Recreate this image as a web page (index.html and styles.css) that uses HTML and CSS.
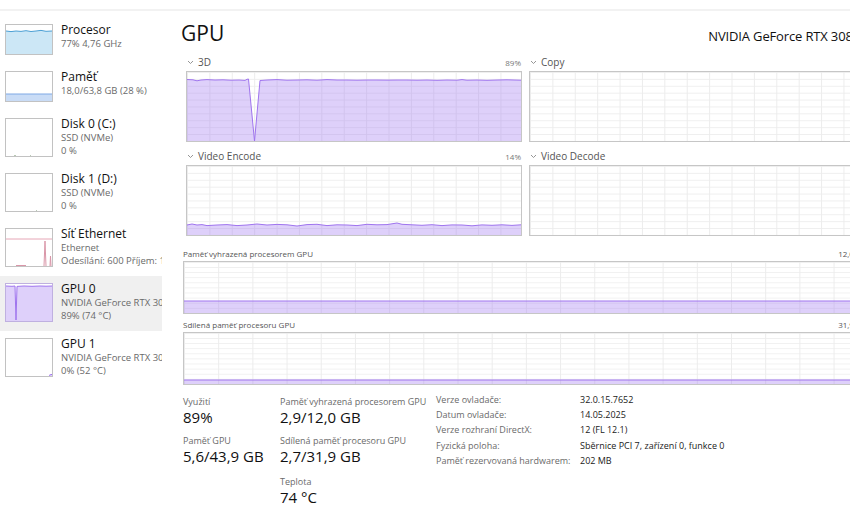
FILE: index.html
```html
<!DOCTYPE html>
<html lang="cs">
  <head>
    <meta charset="UTF-8" />
    <meta name="viewport" content="width=device-width, initial-scale=1.0" />
    <title>Výkon - GPU 0</title>
    <link rel="stylesheet" href="styles.css">
  </head>
  <body>
    <div class="topbar"></div>

    <div class="layout">
      <!-- left list of devices -->
      <nav class="sidebar">
        <div class="item">
          <div class="thumb short">
            <svg viewBox="0 0 46 29" preserveAspectRatio="none">
              <polygon class="cpu-fill" points="0,6 5,6.6 10,6 15,6.4 20,5.7 25,6.5 30,6 35,5.4 40,6.3 46,6 46,29 0,29" />
              <polyline class="cpu-line" points="0,6 5,6.6 10,6 15,6.4 20,5.7 25,6.5 30,6 35,5.4 40,6.3 46,6" />
            </svg>
          </div>
          <div class="item-text">
            <div class="item-title">Procesor</div>
            <div class="item-sub">77% 4,76 GHz</div>
          </div>
        </div>

        <div class="item">
          <div class="thumb short">
            <svg viewBox="0 0 46 29" preserveAspectRatio="none">
              <rect class="mem-fill" x="0" y="22" width="46" height="7" />
              <line class="mem-line" x1="0" y1="22" x2="46" y2="22" />
            </svg>
          </div>
          <div class="item-text">
            <div class="item-title">Paměť</div>
            <div class="item-sub">18,0/63,8 GB (28 %)</div>
          </div>
        </div>

        <div class="item">
          <div class="thumb">
            <svg viewBox="0 0 46 37" preserveAspectRatio="none">
              <line class="disk-line" x1="8" y1="36.5" x2="10" y2="36.5" />
              <line class="disk-line" x1="24" y1="36.5" x2="25" y2="36.5" />
            </svg>
          </div>
          <div class="item-text">
            <div class="item-title">Disk 0 (C:)</div>
            <div class="item-sub">SSD (NVMe)</div>
            <div class="item-sub">0 %</div>
          </div>
        </div>

        <div class="item">
          <div class="thumb">
            <svg viewBox="0 0 46 37" preserveAspectRatio="none">
              <line class="disk-line" x1="30" y1="36.5" x2="31" y2="36.5" />
            </svg>
          </div>
          <div class="item-text">
            <div class="item-title">Disk 1 (D:)</div>
            <div class="item-sub">SSD (NVMe)</div>
            <div class="item-sub">0 %</div>
          </div>
        </div>

        <div class="item">
          <div class="thumb">
            <svg viewBox="0 0 46 37" preserveAspectRatio="none">
              <line class="net-line" x1="0" y1="10" x2="46" y2="10" />
              <polyline class="net-spike" points="38,37 39,12 40,37" />
              <polyline class="net-spike" points="44,37 44.5,27 45,37" />
              <line class="net-spike" x1="10" y1="36.5" x2="20" y2="36.5" />
            </svg>
          </div>
          <div class="item-text">
            <div class="item-title">Síť Ethernet</div>
            <div class="item-sub">Ethernet</div>
            <div class="item-sub">Odesílání: 600 Příjem: 1,6 Mb/s</div>
          </div>
        </div>

        <div class="item selected">
          <div class="thumb gpu">
            <svg viewBox="0 0 46 37" preserveAspectRatio="none">
              <polygon class="gpu-fill" points="0,2 6,2.3 9,2 10,36 11,2.4 18,2 26,2.3 34,2 40,2.2 46,2 46,37 0,37" />
              <polyline class="gpu-line" points="0,2 6,2.3 9,2 10,36 11,2.4 18,2 26,2.3 34,2 40,2.2 46,2" />
            </svg>
          </div>
          <div class="item-text">
            <div class="item-title">GPU 0</div>
            <div class="item-sub">NVIDIA GeForce RTX 3080</div>
            <div class="item-sub">89% (74 °C)</div>
          </div>
        </div>

        <div class="item">
          <div class="thumb">
            <svg viewBox="0 0 46 37" preserveAspectRatio="none">
              <polygon class="gpu-fill" points="43,37 45,35.5 46,35.5 46,37" />
              <polyline class="gpu-line" points="43,36.5 45,35.5 46,35.5" />
            </svg>
          </div>
          <div class="item-text">
            <div class="item-title">GPU 1</div>
            <div class="item-sub">NVIDIA GeForce RTX 3070</div>
            <div class="item-sub">0% (52 °C)</div>
          </div>
        </div>
      </nav>

      <main class="main">
        <div class="header">
          <h1>GPU</h1>
          <div class="device-name">NVIDIA GeForce RTX 3080</div>
        </div>

        <div class="engines">
          <div class="engine">
            <div class="engine-head">
              <span class="engine-name"><svg class="chevron" viewBox="0 0 7 5"><polyline points="1,1 3.5,3.5 6,1" /></svg>3D</span>
              <span class="engine-pct">89%</span>
            </div>
            <div class="graph">
              <svg viewBox="0 0 334 69" preserveAspectRatio="none">
                <polygon class="gpu-fill" points="0,7.5 6,7.8 10,8.8 14,8 20,7.6 28,8 36,7.8 44,8.2 52,8 58,8.4 60,7.3 61.5,7 67.5,69 73,8.5 80,8 90,7.6 100,8.2 110,8 120,7.8 130,8.2 140,7.6 150,8 160,8 170,8.2 180,8 190,8 200,8.1 210,8 220,8 230,8.2 240,8 250,8.3 260,8 270,8.2 275,7.6 280,8.2 290,8 300,8.3 310,8 320,7.8 334,8.2 334,69 0,69" />
                <polyline class="gpu-line" points="0,7.5 6,7.8 10,8.8 14,8 20,7.6 28,8 36,7.8 44,8.2 52,8 58,8.4 60,7.3 61.5,7 67.5,69 73,8.5 80,8 90,7.6 100,8.2 110,8 120,7.8 130,8.2 140,7.6 150,8 160,8 170,8.2 180,8 190,8 200,8.1 210,8 220,8 230,8.2 240,8 250,8.3 260,8 270,8.2 275,7.6 280,8.2 290,8 300,8.3 310,8 320,7.8 334,8.2" />
              </svg>
            </div>
          </div>

          <div class="engine">
            <div class="engine-head">
              <span class="engine-name"><svg class="chevron" viewBox="0 0 7 5"><polyline points="1,1 3.5,3.5 6,1" /></svg>Copy</span>
            </div>
            <div class="graph"></div>
          </div>

          <div class="engine">
            <div class="engine-head">
              <span class="engine-name"><svg class="chevron" viewBox="0 0 7 5"><polyline points="1,1 3.5,3.5 6,1" /></svg>Video Encode</span>
              <span class="engine-pct">14%</span>
            </div>
            <div class="graph">
              <svg viewBox="0 0 334 69" preserveAspectRatio="none">
                <polygon class="gpu-fill" points="0,59 5,58 10,59 15,58.6 20,59.6 30,59 40,58.6 50,59.6 60,59 70,58 80,59 90,58.4 100,58.8 110,60 120,58.6 130,58.3 140,59.6 150,58.8 160,59 170,59.6 180,58.3 190,58.8 200,58.6 210,57 215,58.3 225,58.8 235,59.3 245,58.7 255,59.6 265,58.9 275,59 285,59.8 295,58.9 305,59.3 315,58.8 325,59.4 334,58.8 334,69 0,69" />
                <polyline class="gpu-line" points="0,59 5,58 10,59 15,58.6 20,59.6 30,59 40,58.6 50,59.6 60,59 70,58 80,59 90,58.4 100,58.8 110,60 120,58.6 130,58.3 140,59.6 150,58.8 160,59 170,59.6 180,58.3 190,58.8 200,58.6 210,57 215,58.3 225,58.8 235,59.3 245,58.7 255,59.6 265,58.9 275,59 285,59.8 295,58.9 305,59.3 315,58.8 325,59.4 334,58.8" />
              </svg>
            </div>
          </div>

          <div class="engine">
            <div class="engine-head">
              <span class="engine-name"><svg class="chevron" viewBox="0 0 7 5"><polyline points="1,1 3.5,3.5 6,1" /></svg>Video Decode</span>
            </div>
            <div class="graph"></div>
          </div>
        </div>

        <div class="memory dedicated">
          <div class="memory-head">
            <span>Paměť vyhrazená procesorem GPU</span>
            <span>12,0 GB</span>
          </div>
          <div class="graph wide">
            <svg viewBox="0 0 100 51" preserveAspectRatio="none">
              <rect class="gpu-fill" x="0" y="39" width="100" height="12" />
              <line class="gpu-line" x1="0" y1="39" x2="100" y2="39" />
            </svg>
          </div>
        </div>

        <div class="memory">
          <div class="memory-head">
            <span>Sdílená paměť procesoru GPU</span>
            <span>31,9 GB</span>
          </div>
          <div class="graph wide">
            <svg viewBox="0 0 100 51" preserveAspectRatio="none">
              <rect class="gpu-fill" x="0" y="47" width="100" height="4" />
              <line class="gpu-line" x1="0" y1="47" x2="100" y2="47" />
            </svg>
          </div>
        </div>

        <div class="stats">
          <div class="stat-col">
            <div class="stat">
              <div class="stat-label">Využití</div>
              <div class="stat-value">89%</div>
            </div>
            <div class="stat">
              <div class="stat-label">Paměť GPU</div>
              <div class="stat-value">5,6/43,9 GB</div>
            </div>
          </div>

          <div class="stat-col">
            <div class="stat">
              <div class="stat-label">Paměť vyhrazená procesorem GPU</div>
              <div class="stat-value">2,9/12,0 GB</div>
            </div>
            <div class="stat">
              <div class="stat-label">Sdílená paměť procesoru GPU</div>
              <div class="stat-value">2,7/31,9 GB</div>
            </div>
            <div class="stat temp">
              <div class="stat-label">Teplota</div>
              <div class="stat-value">74 °C</div>
            </div>
          </div>

          <dl class="details">
            <dt>Verze ovladače:</dt>
            <dd>32.0.15.7652</dd>
            <dt>Datum ovladače:</dt>
            <dd>14.05.2025</dd>
            <dt>Verze rozhraní DirectX:</dt>
            <dd>12 (FL 12.1)</dd>
            <dt>Fyzická poloha:</dt>
            <dd>Sběrnice PCI 7, zařízení 0, funkce 0</dd>
            <dt>Paměť rezervovaná hardwarem:</dt>
            <dd>202 MB</dd>
          </dl>
        </div>
      </main>
    </div>
  </body>
</html>
```

FILE: styles.css
```css
html,
body {
  margin: 0;
  padding: 0;
}
body {
  font-family: "Segoe UI", "Open Sans", sans-serif;
  color: #1a1a1a;
  background: #fff;
  overflow: hidden;
}
.topbar {
  height: 9px;
  border-bottom: 2px solid #f2f2f2;
}
.layout {
  display: flex;
  align-items: flex-start;
}

/* sidebar */
.sidebar {
  width: 162px;
  flex: none;
  padding-top: 6px;
  overflow: hidden;
}
.item {
  display: flex;
  align-items: flex-start;
  gap: 8px;
  padding: 7px 0 9px 5px;
  white-space: nowrap;
}
.item.selected {
  background-color: #f0f0f0;
}
.thumb {
  width: 48px;
  height: 39px;
  flex: none;
  box-sizing: border-box;
  border: 1px solid #c2c2c2;
  background: #fff;
}
.thumb.short {
  height: 31px;
}
.thumb.gpu {
  border-color: #bfb0e0;
}
.thumb svg {
  display: block;
  width: 100%;
  height: 100%;
}
.item-text {
  margin-top: -2px;
  min-width: 0;
}
.item-title {
  font-size: 12px;
  line-height: 15px;
  color: #111;
}
.item-sub {
  font-size: 9.5px;
  line-height: 13px;
  color: #6a6a6a;
}

.cpu-fill {
  fill: #cce7f6;
}
.cpu-line {
  fill: none;
  stroke: #4a9fd4;
  stroke-width: 1;
  vector-effect: non-scaling-stroke;
}
.mem-fill {
  fill: #c9dcf6;
}
.mem-line {
  stroke: #7ea8e4;
  stroke-width: 1;
  vector-effect: non-scaling-stroke;
}
.disk-line {
  stroke: #b9c9b4;
  stroke-width: 1;
  vector-effect: non-scaling-stroke;
}
.net-line {
  stroke: #e6a6b6;
  stroke-width: 1;
  vector-effect: non-scaling-stroke;
}
.net-spike {
  fill: none;
  stroke: #d996a8;
  stroke-width: 1;
  vector-effect: non-scaling-stroke;
}
.gpu-fill {
  fill: rgba(160, 120, 240, 0.35);
}
.gpu-line {
  fill: none;
  stroke: #9f74ee;
  stroke-width: 1;
  vector-effect: non-scaling-stroke;
}

/* main panel */
.main {
  width: 691px;
  flex: none;
  margin-left: 19px;
}
.header {
  display: flex;
  align-items: baseline;
  justify-content: space-between;
  margin-top: 8px;
  padding-right: 12px;
}
h1 {
  margin: 0;
  font-size: 21px;
  line-height: 28px;
  font-weight: 400;
  color: #111;
}
.device-name {
  font-size: 13px;
  letter-spacing: -0.15px;
  color: #111;
}

.engines {
  display: grid;
  grid-template-columns: 336px 336px;
  column-gap: 7px;
  row-gap: 5px;
  padding-left: 5px;
  margin-top: 6px;
}
.engine-head {
  height: 18px;
  display: flex;
  align-items: center;
  justify-content: space-between;
}
.engine-name {
  display: flex;
  align-items: center;
  font-size: 10px;
  color: #555;
}
.chevron {
  width: 7px;
  height: 5px;
  margin: 0 4px 0 1px;
}
.chevron polyline {
  fill: none;
  stroke: #8a8a8a;
  stroke-width: 0.9;
}
.engine-pct {
  font-size: 8px;
  color: #777;
  padding-right: 1px;
}
.graph {
  height: 71px;
  box-sizing: border-box;
  border: 1px solid #c6c6c6;
  background-color: #fff;
  background-image: linear-gradient(90deg, #ececec 1px, transparent 1px),
    linear-gradient(#efefef 1px, transparent 1px);
  background-size: 22.4px 100%, 100% 6.9px;
}
.graph svg {
  display: block;
  width: 100%;
  height: 100%;
}
.graph.wide {
  height: 53px;
  background-size: 34.2px 100%, 100% 5.1px;
}

.memory {
  margin-left: 2px;
  margin-right: 5px;
  margin-top: 3px;
}
.memory.dedicated {
  margin-top: 10px;
}
.memory-head {
  height: 15px;
  display: flex;
  align-items: center;
  justify-content: space-between;
  font-size: 8px;
  color: #555;
}

/* numbers under the graphs */
.stats {
  display: grid;
  grid-template-columns: 97px 156px auto;
  align-items: start;
  margin-top: 5px;
  margin-left: 2px;
}
.stat-col {
  padding-top: 5px;
}
.stat {
  margin-bottom: 8px;
}
.stat.temp {
  margin-top: 10px;
}
.stat-label {
  font-size: 9px;
  line-height: 13px;
  color: #6a6a6a;
  white-space: nowrap;
}
.stat-value {
  font-size: 15px;
  line-height: 18px;
  color: #111;
  white-space: nowrap;
}
.details {
  display: grid;
  grid-template-columns: 144px auto;
  align-content: start;
  margin: 2px 0 0;
  font-size: 9px;
  line-height: 15.2px;
}
.details dt {
  color: #6a6a6a;
  white-space: nowrap;
}
.details dd {
  margin: 0;
  color: #1a1a1a;
  white-space: nowrap;
}
```
